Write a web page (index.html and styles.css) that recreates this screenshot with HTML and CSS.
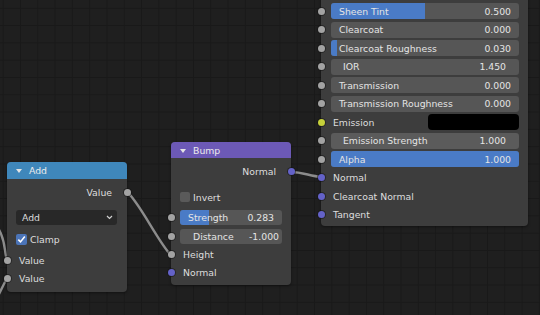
FILE: index.html
```html
<!DOCTYPE html>
<html>
<head>
<meta charset="utf-8">
<link rel="stylesheet" href="styles.css">
</head>
<body>
<div class="canvas">
  <svg class="wires" width="540" height="315" viewBox="0 0 540 315">
    <path d="M-2,228 C6,240 4,252 7,260" class="wire"/>
    <path d="M7,278 C4,284 2,288 -2,296" class="wire"/>
    <path d="M127,192 C138,200 160,245 171,255" class="wire"/>
    <defs>
      <linearGradient id="g1" x1="0" x2="1" y1="0" y2="0">
        <stop offset="0" stop-color="#8c8c8c"/>
        <stop offset="1" stop-color="#8c8c8c"/>
      </linearGradient>
    </defs>
    <path d="M291,172 C302,172 310,176 321,177" class="wire" stroke="url(#g1)"/>
  </svg>

  <div class="node node-add">
    <div class="header hdr-blue"><span class="tri"></span><span>Add</span></div>
    <div class="row out"><span>Value</span><i class="sock s-gray sock-r"></i></div>
    <div class="select"><span>Add</span>
      <svg class="chev" width="7" height="5" viewBox="0 0 7 5"><path d="M1,1 L3.5,3.5 L6,1" /></svg>
    </div>
    <div class="row check"><span class="cb on"><svg width="11" height="11" viewBox="0 0 11 11"><path d="M2.3,5.6 L4.5,7.9 L8.8,2.6"/></svg></span><span>Clamp</span></div>
    <div class="row in first-in"><i class="sock s-gray sock-l"></i><span>Value</span></div>
    <div class="row in"><i class="sock s-gray sock-l"></i><span>Value</span></div>
  </div>

  <div class="node node-bump">
    <div class="header hdr-purple"><span class="tri"></span><span>Bump</span></div>
    <div class="row out"><span>Normal</span><i class="sock s-purple sock-r"></i></div>
    <div class="row check invert"><span class="cb"></span><span>Invert</span></div>
    <div class="frow strength"><i class="sock s-gray sock-l"></i>
      <div class="field"><span class="fill" style="width:28.3%"></span><span class="lbl">Strength</span><span class="val">0.283</span></div>
    </div>
    <div class="frow distance"><i class="sock s-gray sock-l"></i>
      <div class="field num tight"><span class="lbl">Distance</span><span class="val">-1.000</span></div>
    </div>
    <div class="row in height"><i class="sock s-gray sock-l"></i><span>Height</span></div>
    <div class="row in"><i class="sock s-purple sock-l"></i><span>Normal</span></div>
  </div>

  <div class="node node-bsdf">
    <div class="prow"><i class="sock s-gray sock-l"></i>
      <div class="field"><span class="fill" style="width:50%"></span><span class="lbl">Sheen Tint</span><span class="val">0.500</span></div></div>
    <div class="prow"><i class="sock s-gray sock-l"></i>
      <div class="field"><span class="lbl">Clearcoat</span><span class="val">0.000</span></div></div>
    <div class="prow"><i class="sock s-gray sock-l"></i>
      <div class="field"><span class="fill" style="width:3%"></span><span class="lbl">Clearcoat Roughness</span><span class="val">0.030</span></div></div>
    <div class="prow"><i class="sock s-gray sock-l"></i>
      <div class="field num"><span class="lbl">IOR</span><span class="val">1.450</span></div></div>
    <div class="prow"><i class="sock s-gray sock-l"></i>
      <div class="field"><span class="lbl">Transmission</span><span class="val">0.000</span></div></div>
    <div class="prow"><i class="sock s-gray sock-l"></i>
      <div class="field"><span class="lbl">Transmission Roughness</span><span class="val">0.000</span></div></div>
    <div class="prow"><i class="sock s-yellow sock-l"></i>
      <span class="plabel">Emission</span><span class="swatch"></span></div>
    <div class="prow"><i class="sock s-gray sock-l"></i>
      <div class="field num hover"><span class="lbl">Emission Strength</span><span class="val">1.000</span></div></div>
    <div class="prow"><i class="sock s-gray sock-l"></i>
      <div class="field"><span class="fill" style="width:100%"></span><span class="lbl">Alpha</span><span class="val">1.000</span></div></div>
    <div class="prow"><i class="sock s-purple sock-l"></i><span class="plabel">Normal</span></div>
    <div class="prow"><i class="sock s-purple sock-l"></i><span class="plabel">Clearcoat Normal</span></div>
    <div class="prow"><i class="sock s-purple sock-l"></i><span class="plabel">Tangent</span></div>
  </div>
</div>
</body>
</html>
```

FILE: styles.css
```css
html, body {
  margin: 0;
  padding: 0;
}
body {
  width: 540px;
  height: 315px;
  overflow: hidden;
  background-color: #1f1f1f;
  background-image:
    linear-gradient(to right, #191919 1px, transparent 1px),
    linear-gradient(to bottom, #191919 1px, transparent 1px);
  background-size: 17.3px 17.3px;
  background-position: 2.7px 7.8px;
  font-family: "DejaVu Sans", "Noto Sans", sans-serif;
  font-size: 9.3px;
  color: #dedede;
}
.canvas {
  position: relative;
  width: 540px;
  height: 315px;
}
.wires {
  position: absolute;
  left: 0;
  top: 0;
}
.wire {
  fill: none;
  stroke: #8c8c8c;
  stroke-width: 2.4;
}

.node {
  position: absolute;
  background: #3d3d3d;
  border-radius: 4px;
  box-shadow: 0 1px 3px rgba(0, 0, 0, 0.45);
  box-sizing: border-box;
}
.node-add {
  left: 7px;
  top: 162px;
  width: 120px;
  height: 130px;
}
.node-bump {
  left: 171px;
  top: 142px;
  width: 120px;
  height: 143px;
}
.node-bsdf {
  left: 321px;
  top: -4px;
  width: 207px;
  height: 230px;
  padding-top: 6px;
}

.header {
  display: flex;
  align-items: center;
  color: #ececec;
  border-radius: 4px 4px 0 0;
  padding-left: 9px;
}
.hdr-blue {
  height: 17px;
  background: #3f87bb;
}
.hdr-purple {
  height: 16px;
  background: #6c59b6;
}
.tri {
  width: 0;
  height: 0;
  border-left: 3px solid transparent;
  border-right: 3px solid transparent;
  border-top: 4px solid #e4e4e4;
  margin-right: 7px;
  margin-top: 1px;
}

.row {
  position: relative;
  height: 18px;
  display: flex;
  align-items: center;
}
.row.out {
  justify-content: flex-end;
  padding-right: 15px;
  margin-top: 4px;
}
.row.in {
  padding-left: 12px;
}
.row.check {
  padding-left: 9px;
}
.node-add .row.check {
  margin-top: 5px;
}
.node-add .first-in {
  margin-top: 3px;
}
.node-bump .invert {
  margin-top: 8px;
}
.node-bump .height {
  margin-top: 1px;
}

.sock {
  position: absolute;
  top: 50%;
  width: 7px;
  height: 7px;
  margin-top: -3.5px;
  border-radius: 50%;
  box-shadow: 0 0 0 1px rgba(20, 20, 20, 0.55);
}
.sock-l { left: -3.5px; }
.sock-r { right: -3.5px; }
.s-gray { background: #a3a3a3; }
.s-purple { background: #6462c8; }
.s-yellow { background: #c5d03a; }

.select {
  margin: 9px 10px 0 9px;
  height: 15px;
  background: #282828;
  border-radius: 3px;
  display: flex;
  align-items: center;
  justify-content: space-between;
  padding: 0 4px 0 6px;
  color: #dcdcdc;
}
.chev path {
  fill: none;
  stroke: #d0d0d0;
  stroke-width: 1.2;
}

.cb {
  width: 11px;
  height: 11px;
  border-radius: 2px;
  background: #5a5a5a;
  margin-right: 3px;
  display: flex;
}
.node-bump .cb {
  width: 10px;
  height: 10px;
}
.cb.on {
  background: #4b74b8;
}
.cb path {
  fill: none;
  stroke: #ffffff;
  stroke-width: 1.6;
}

.frow {
  position: relative;
  display: flex;
  align-items: center;
}
.node-bump .frow {
  height: 15px;
  margin-top: 4px;
}
.node-bump .frow .field {
  margin: 0 9px;
  height: 15px;
}

.field {
  position: relative;
  flex: 1;
  height: 16px;
  background: #565656;
  border-radius: 3px;
  overflow: hidden;
  display: flex;
  align-items: center;
  justify-content: space-between;
  padding: 0 8px 0 8px;
  color: #e4e4e4;
  box-sizing: border-box;
}
.field.num {
  padding: 0 13px 0 12px;
}
.field.num.tight {
  padding: 0 3px 0 13px;
}
.field.hover {
  background: #5b5b5b;
}
.fill {
  position: absolute;
  left: 0;
  top: 0;
  bottom: 0;
  background: #4a7bc6;
}
.lbl, .val {
  position: relative;
  white-space: nowrap;
}

.prow {
  position: relative;
  height: 18.5px;
  display: flex;
  align-items: center;
}
.prow .field {
  margin: 0 9px 0 10px;
}
.plabel {
  padding-left: 12px;
  color: #dedede;
}
.swatch {
  margin-left: auto;
  margin-right: 9px;
  width: 91px;
  height: 16px;
  background: #000000;
  border-radius: 4px;
}
```
